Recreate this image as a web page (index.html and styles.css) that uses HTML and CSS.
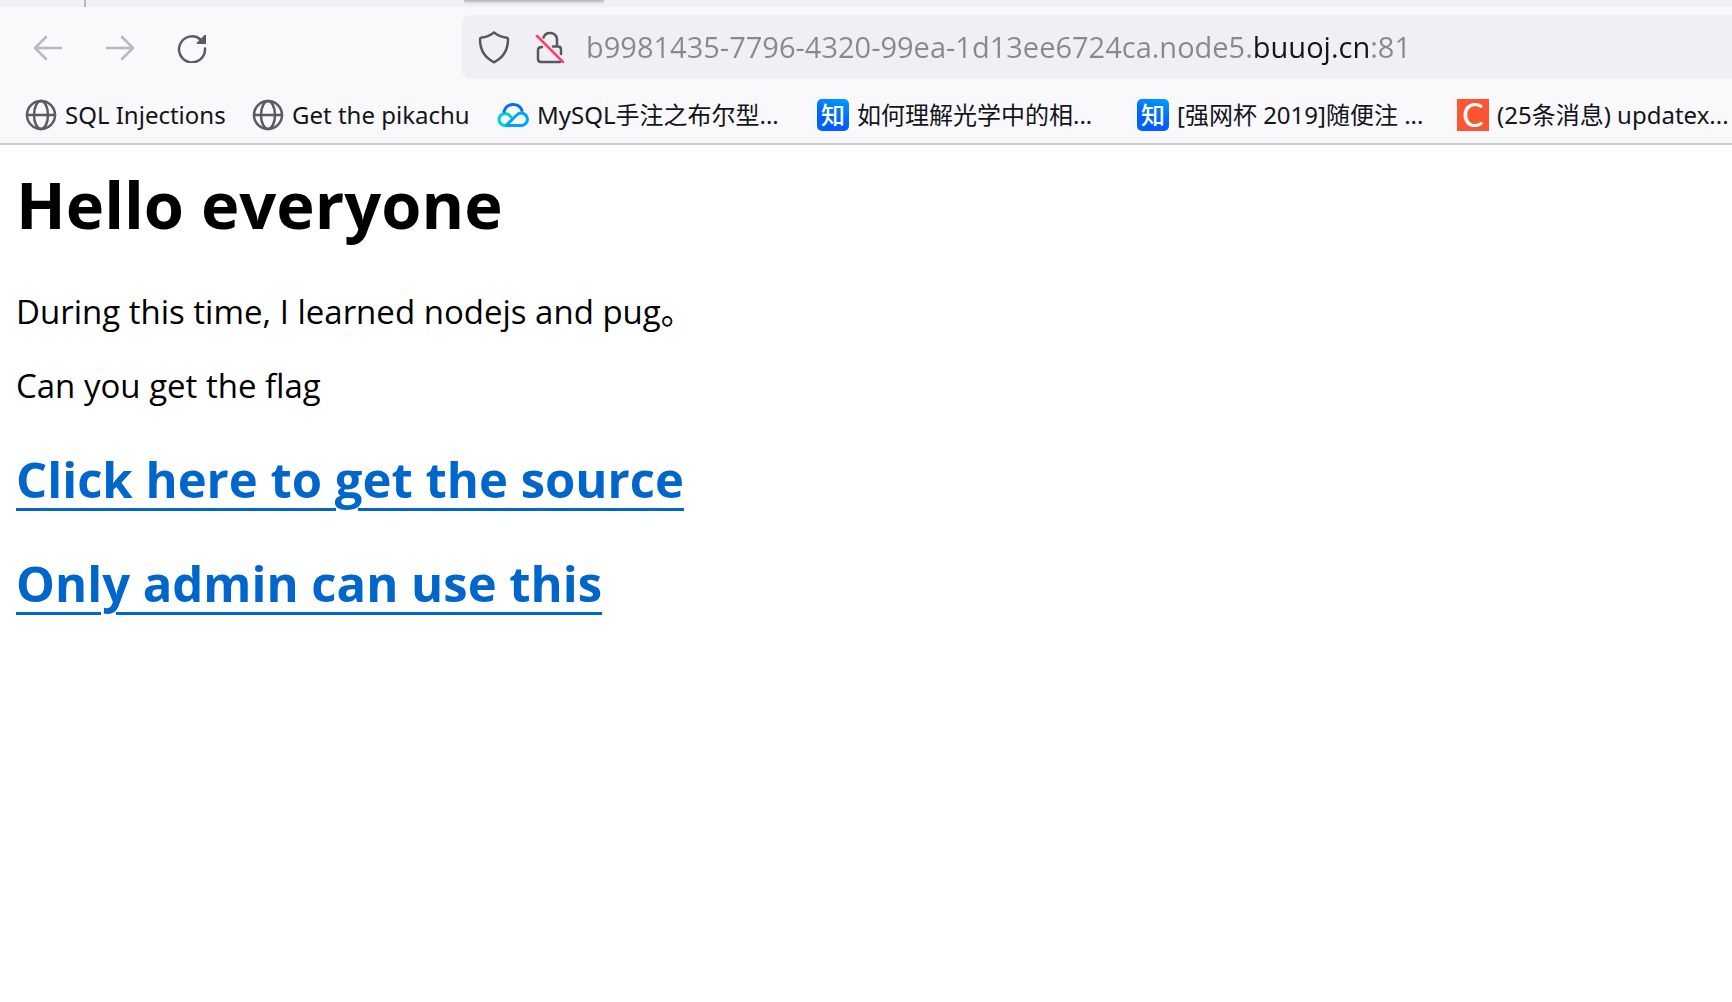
FILE: index.html
```html
<!DOCTYPE html>
<html lang="en">
<head>
<meta charset="utf-8">
<title>Hello everyone</title>
<link rel="stylesheet" href="styles.css">
</head>
<body>
<header class="browser">
  <div class="tabstrip"><span class="tab-divider"></span><span class="active-tab"></span></div>
  <div class="toolbar">
    <div class="nav-buttons">
      <button class="nav-button" type="button" aria-label="Back" disabled>
        <svg width="32" height="32" viewBox="0 0 32 32"><path d="M29 17H3M14 6L3 17l11 11"/></svg>
      </button>
      <button class="nav-button" type="button" aria-label="Forward" disabled>
        <svg width="32" height="32" viewBox="0 0 32 32"><path d="M3 17h26M18 6l11 11-11 11"/></svg>
      </button>
      <button class="nav-button" type="button" aria-label="Reload">
        <svg width="32" height="32" viewBox="0 0 32 32"><path d="M24.500 8.500A13 13 0 1 0 29 17.500"/><path class="solid" d="M30 4v9h-8.500q-1.500-.5-.5-1.500l7.500-7.500z"/></svg>
      </button>
    </div>
    <div class="urlbar">
      <button class="url-icon" type="button" aria-label="Tracking protection">
        <svg width="32" height="34" viewBox="0 0 32 34"><path d="M16 2.500c4 3 8 4.700 13 5.300q1 .3 1 1.500c0 10-4 18-14 23C6 27.300 2 19.300 2 9.300q0-1.200 1-1.500C8 7.200 12 5.500 16 2.500z"/></svg>
      </button>
      <button class="url-icon" type="button" aria-label="Connection not secure">
        <svg width="32" height="34" viewBox="0 0 32 34"><path d="M9.500 7.500A7 7 0 0 1 23 9v7M8 17q-4 0-4 3v9q0 3 3 3h19M19 16.500h5q3 0 3 3V24"/><path class="slash" d="M3 6l26 26"/></svg>
      </button>
      <input class="url-input" type="text" aria-label="Address" spellcheck="false" value="b9981435-7796-4320-99ea-1d13ee6724ca.node5.buuoj.cn:81">
    </div>
  </div>
  <nav class="bookmarks" aria-label="Bookmarks">
    <a class="bookmark first" href="#">
      <svg class="globe" width="32" height="32" viewBox="0 0 32 32"><circle cx="16" cy="16" r="14"/><ellipse cx="16" cy="16" rx="7" ry="14"/><path d="M2 16h28"/></svg>
      <span>SQL Injections</span></a>
    <a class="bookmark second" href="#">
      <svg class="globe" width="32" height="32" viewBox="0 0 32 32"><circle cx="16" cy="16" r="14"/><ellipse cx="16" cy="16" rx="7" ry="14"/><path d="M2 16h28"/></svg>
      <span>Get the pikachu</span></a>
    <a class="bookmark" href="#">
      <svg class="cloud" width="32" height="32" viewBox="0 0 32 32"><path stroke="#00d0d8" d="M17 26.500H7.500a6 6 0 1 1 4.500-10.500l2 2"/><path stroke="#006eff" d="M7 12.500a9.500 9.500 0 0 1 18-1"/><path stroke="#00a4ff" d="M10 26.500h14a6.200 6.200 0 1 0-4.500-10.300L9.500 26"/></svg>
      <span>MySQL手注之布尔型...</span></a>
    <a class="bookmark" href="#"><span class="zhihu">知</span><span>如何理解光学中的相...</span></a>
    <a class="bookmark" href="#"><span class="zhihu">知</span><span>[强网杯 2019]随便注 ...</span></a>
    <a class="bookmark" href="#"><span class="csdn">C</span><span>(25条消息) updatex...</span></a>
  </nav>
</header>
<main class="page">
  <h1>Hello everyone</h1>
  <p>During this time, I learned nodejs and pug。</p>
  <p>Can you get the flag</p>
  <h2><a href="#">Click here to get the source</a></h2>
  <h2><a href="#">Only admin can use this</a></h2>
</main>
</body>
</html>
```
FILE: styles.css
```css
* { box-sizing: border-box; }
body {
  margin: 0;
  background: #fff;
  color: #000;
  font-family: "Open Sans", "Noto Sans CJK SC", sans-serif;
  overflow-x: hidden;
}
button { border: 0; padding: 0; background: none; display: flex; align-items: center; justify-content: center; }
svg { display: block; flex: none; fill: none; stroke-width: 2.5; stroke-linecap: round; stroke-linejoin: round; }

.browser { background: #f9f9fb; border-bottom: 2px solid #ccc; overflow: hidden; }
.tabstrip { display: flex; height: 7px; background: #f0f0f4; overflow: hidden; }
.tab-divider { width: 2px; margin-left: 84px; background: #b9b9bf; }
.active-tab { width: 140px; height: 4px; margin-left: 378px; background: linear-gradient(#b4b4b8, #f0f0f4); border-radius: 0 0 6px 6px; }

.toolbar { display: flex; align-items: center; height: 80px; padding-left: 12px; }
.nav-buttons { display: flex; width: 450px; }
.nav-button { width: 72px; height: 64px; }
.nav-button svg { stroke: #5b5b66; }
.nav-button:disabled svg { stroke: #b8b8bf; }
.nav-button .solid { fill: #5b5b66; stroke: none; }
.urlbar { display: flex; align-items: center; gap: 24px; flex: 1; height: 64px; padding-left: 16px; background: #f0f0f4; border-radius: 8px 0 0 8px; }
.url-icon { width: 32px; height: 48px; }
.url-icon svg { stroke: #57575d; }
.url-icon .slash { stroke: #ff4069; }
.url-input {
  flex: 1;
  min-width: 0;
  height: 48px;
  margin-left: -4px;
  padding: 0 0 2px;
  border: 0;
  outline: 0;
  font: 29px "Open Sans", sans-serif;
  color: transparent;
  background: linear-gradient(90deg, #88888d 666px, #15141a 666px 783px, #88888d 783px);
  background-clip: text;
}

.bookmarks { display: flex; height: 56px; padding-left: 25px; }
.bookmark { display: flex; align-items: center; gap: 8px; flex: 0 0 320px; font-family: "Noto Sans", "Noto Sans CJK SC", sans-serif; font-size: 24px; line-height: 32px; white-space: nowrap; color: #15141a; text-decoration: none; }
.first { flex-basis: 227px; }
.second { flex-basis: 245px; }
.globe { stroke: #5b5b66; }
.cloud { stroke-width: 3; }
.zhihu, .csdn { width: 32px; height: 32px; line-height: 32px; text-align: center; color: #fff; }
.zhihu { border-radius: 5px; background: linear-gradient(20deg, #0060ff 40%, #00a0ff); font-weight: 500; }
.csdn { background: #fc5531; font: 500 32px/32px Lato, sans-serif; }

.page { padding: 16px; }
h1, h2, p { margin: 0; }
h1 { margin-bottom: 42px; font-size: 65px; line-height: 86px; }
p { margin-bottom: 28px; font-size: 33px; line-height: 46px; }
h2 { margin: 36px 0; font-size: 49px; line-height: 68px; }
h2 a { color: #06c; text-decoration-thickness: 3px; text-underline-offset: 10px; }
```
